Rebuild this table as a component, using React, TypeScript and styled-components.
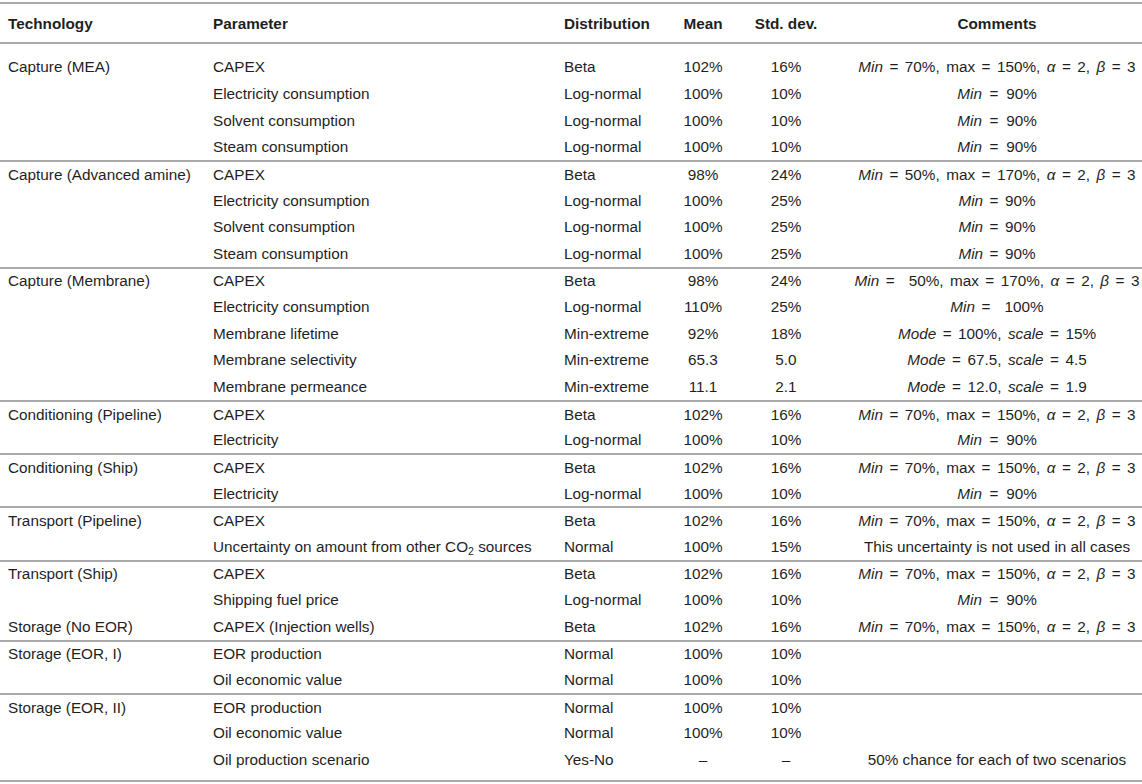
import React from "react";
import styled, { createGlobalStyle } from "styled-components";

const Global = createGlobalStyle`
  html, body { margin: 0; padding: 0; background: #ffffff; }
  body { font-family: "Liberation Sans", Arial, Helvetica, sans-serif; color: #1f1f1f; }
`;

const COLS = "205px 351px 104px 86px 80px 316px";
const LINE = "#a9a9a9";

const Table = styled.div`
  width: 1142px;
  padding-top: 2px;
  font-size: 15.3px;
`;

const HeadRow = styled.div`
  display: grid;
  grid-template-columns: ${COLS};
  align-items: center;
  height: 38px;
  border-top: 2px solid ${LINE};
  border-bottom: 2px solid ${LINE};
  font-weight: bold;
`;

const Body = styled.div`
  padding: 9.5px 0 7px;
  border-bottom: 2px solid ${LINE};
`;

const Row = styled.div<{ $sep?: boolean }>`
  display: grid;
  grid-template-columns: ${COLS};
  align-items: center;
  box-sizing: border-box;
  height: 26.65px;
  border-top: ${(p) => (p.$sep ? `2px solid ${LINE}` : "none")};
`;

type Kind = "left" | "center" | "comment";

const CellBox = styled.div<{ $kind: Kind }>`
  display: flex;
  justify-content: ${(p) => (p.$kind === "left" ? "flex-start" : "center")};
  padding-left: ${(p) => (p.$kind === "left" ? "8px" : p.$kind === "comment" ? "26px" : "0")};
  min-width: 0;
  white-space: nowrap;
  line-height: 17px;
`;

const CellText = styled.span`
  flex: none;
  white-space: pre;
`;

const Cell = ({ kind = "left", children }: { kind?: Kind; children?: React.ReactNode }) => (
  <CellBox $kind={kind}>
    <CellText>{children}</CellText>
  </CellBox>
);

const Math = styled.span`
  word-spacing: 2.2px;
`;

const M = styled.i`
  font-style: italic;
`;

const Sub = styled.sub`
  font-size: 10.5px;
  line-height: 0;
  vertical-align: -3px;
`;

const WS = "\u2002";

const beta = (min: string, max: string) => (
  <Math>
    <M>Min</M> = {min}, max = {max}, <M>α</M> = 2, <M>β</M> = 3
  </Math>
);
const minC = (v: string, wide: boolean) => (
  <Math>
    <M>Min</M>
    {wide ? `${WS}=${WS}` : " = "}
    {v}
  </Math>
);
const mode = (m: string, s: string) => (
  <Math>
    <M>Mode</M> = {m}, <M>scale</M> = {s}
  </Math>
);

type R = [React.ReactNode, string, string, string, React.ReactNode];
type G = { tech: string; sep: boolean; rows: R[]; techRows?: Record<number, string> };

const groups: G[] = [
  {
    tech: "Capture (MEA)",
    sep: false,
    rows: [
      ["CAPEX", "Beta", "102%", "16%", beta("70%", "150%")],
      ["Electricity consumption", "Log-normal", "100%", "10%", minC("90%", true)],
      ["Solvent consumption", "Log-normal", "100%", "10%", minC("90%", true)],
      ["Steam consumption", "Log-normal", "100%", "10%", minC("90%", true)],
    ],
  },
  {
    tech: "Capture (Advanced amine)",
    sep: true,
    rows: [
      ["CAPEX", "Beta", "98%", "24%", beta("50%", "170%")],
      ["Electricity consumption", "Log-normal", "100%", "25%", minC("90%", false)],
      ["Solvent consumption", "Log-normal", "100%", "25%", minC("90%", false)],
      ["Steam consumption", "Log-normal", "100%", "25%", minC("90%", false)],
    ],
  },
  {
    tech: "Capture (Membrane)",
    sep: true,
    rows: [
      [
        "CAPEX",
        "Beta",
        "98%",
        "24%",
        <Math>
          <M>Min</M> = {"\u2002"}50%, max = 170%, <M>α</M> = 2, <M>β</M> = 3
        </Math>,
      ],
      [
        "Electricity consumption",
        "Log-normal",
        "110%",
        "25%",
        <Math>
          <M>Min</M> = {"\u2002"}100%
        </Math>,
      ],
      ["Membrane lifetime", "Min-extreme", "92%", "18%", mode("100%", "15%")],
      ["Membrane selectivity", "Min-extreme", "65.3", "5.0", mode("67.5", "4.5")],
      ["Membrane permeance", "Min-extreme", "11.1", "2.1", mode("12.0", "1.9")],
    ],
  },
  {
    tech: "Conditioning (Pipeline)",
    sep: true,
    rows: [
      ["CAPEX", "Beta", "102%", "16%", beta("70%", "150%")],
      ["Electricity", "Log-normal", "100%", "10%", minC("90%", true)],
    ],
  },
  {
    tech: "Conditioning (Ship)",
    sep: true,
    rows: [
      ["CAPEX", "Beta", "102%", "16%", beta("70%", "150%")],
      ["Electricity", "Log-normal", "100%", "10%", minC("90%", true)],
    ],
  },
  {
    tech: "Transport (Pipeline)",
    sep: true,
    rows: [
      ["CAPEX", "Beta", "102%", "16%", beta("70%", "150%")],
      [
        <>
          Uncertainty on amount from other CO<Sub>2</Sub> sources
        </>,
        "Normal",
        "100%",
        "15%",
        "This uncertainty is not used in all cases",
      ],
    ],
  },
  {
    tech: "Transport (Ship)",
    sep: true,
    techRows: { 2: "Storage (No EOR)" },
    rows: [
      ["CAPEX", "Beta", "102%", "16%", beta("70%", "150%")],
      ["Shipping fuel price", "Log-normal", "100%", "10%", minC("90%", true)],
      ["CAPEX (Injection wells)", "Beta", "102%", "16%", beta("70%", "150%")],
    ],
  },
  {
    tech: "Storage (EOR, I)",
    sep: true,
    rows: [
      ["EOR production", "Normal", "100%", "10%", ""],
      ["Oil economic value", "Normal", "100%", "10%", ""],
    ],
  },
  {
    tech: "Storage (EOR, II)",
    sep: true,
    rows: [
      ["EOR production", "Normal", "100%", "10%", ""],
      ["Oil economic value", "Normal", "100%", "10%", ""],
      ["Oil production scenario", "Yes-No", "–", "–", "50% chance for each of two scenarios"],
    ],
  },
];

export default function App() {
  return (
    <>
      <Global />
      <Table>
        <HeadRow>
          <Cell>Technology</Cell>
          <Cell>Parameter</Cell>
          <Cell>Distribution</Cell>
          <Cell kind="center">Mean</Cell>
          <Cell kind="center">Std. dev.</Cell>
          <Cell kind="comment">Comments</Cell>
        </HeadRow>
        <Body>
          {groups.map((g, gi) =>
            g.rows.map((r, ri) => (
              <Row key={`${gi}-${ri}`} $sep={g.sep && ri === 0}>
                <Cell>{ri === 0 ? g.tech : g.techRows?.[ri] ?? ""}</Cell>
                <Cell>{r[0]}</Cell>
                <Cell>{r[1]}</Cell>
                <Cell kind="center">{r[2]}</Cell>
                <Cell kind="center">{r[3]}</Cell>
                <Cell kind="comment">{r[4]}</Cell>
              </Row>
            ))
          )}
        </Body>
      </Table>
    </>
  );
}
